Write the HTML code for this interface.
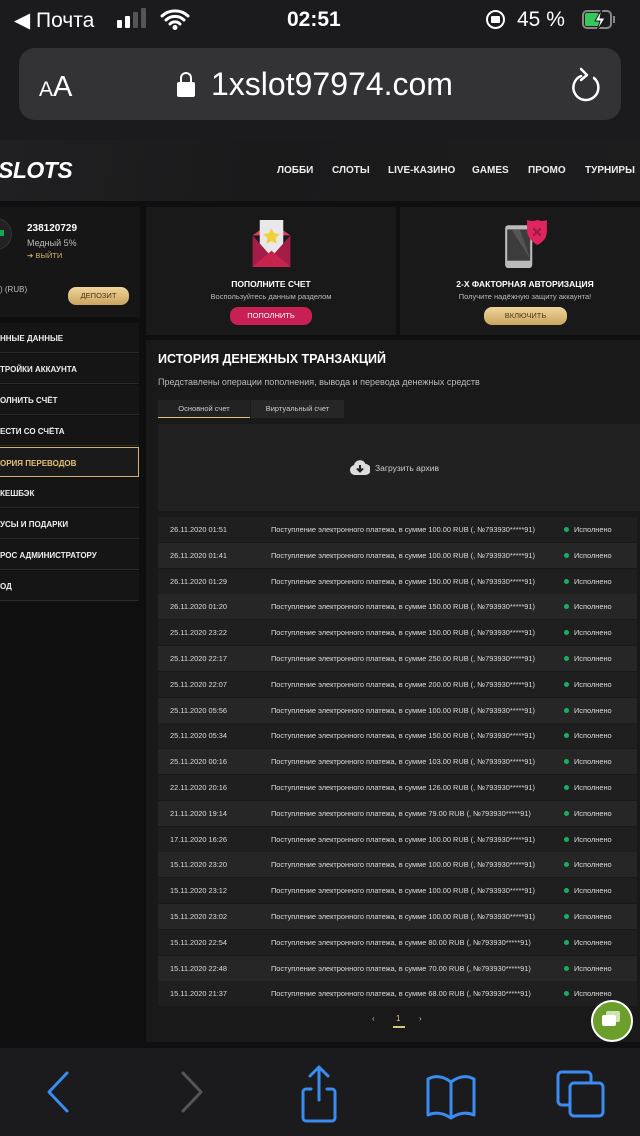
<!DOCTYPE html>
<html><head><meta charset="utf-8">
<style>
*{margin:0;padding:0;box-sizing:border-box}
body{width:640px;height:1136px;overflow:hidden;background:#1b1b1d;font-family:"Liberation Sans",sans-serif;position:relative;color:#fff}
.abs{position:absolute}
.page{position:absolute;left:0;top:140px;width:640px;height:908px;background:#0f0f10;overflow:hidden}
.hdr{position:absolute;left:0;top:0;width:640px;height:61px;background:linear-gradient(100deg,#202022,#1a1a1b 40%,#1d1d1e);}
.nav{position:absolute;top:25px;font-size:10px;font-weight:bold;color:#eee;letter-spacing:0}
.card{position:absolute;background:#19191a}
.menu{position:absolute;left:0;width:139px;height:30px;background:#151516;border-bottom:1px solid #2a2a2a;font-size:8px;font-weight:bold;color:#eee;padding-top:11px;text-transform:uppercase}
.btn{position:absolute;border-radius:8px;font-size:7.5px;text-align:center;line-height:17px}
.gold{background:linear-gradient(#f0d59a,#c9a460);color:#4a3a1a}
.row{position:absolute;left:158px;width:479px;height:25px;font-size:7.4px;color:#ddd;line-height:25px}
.row span{position:absolute}
.dot{width:5px;height:5px;border-radius:50%;background:#19b05c;top:10px}
</style></head><body>
<div class="abs" style="left:14px;top:8px;font-size:21px;color:#fff">◀ Почта</div>
<div class="abs" style="left:117px;top:20px;width:5px;height:8px;background:#fff;border-radius:1px"></div>
<div class="abs" style="left:125px;top:16px;width:5px;height:12px;background:#fff;border-radius:1px"></div>
<div class="abs" style="left:133px;top:12px;width:5px;height:16px;background:#555;border-radius:1px"></div>
<div class="abs" style="left:141px;top:8px;width:5px;height:20px;background:#555;border-radius:1px"></div>
<svg class="abs" style="left:160px;top:8px" width="30" height="22" viewBox="0 0 30 22"><path d="M2 8a19 19 0 0 1 26 0M6 12a13 13 0 0 1 18 0M10 16a7 7 0 0 1 10 0" stroke="#fff" stroke-width="3" fill="none" stroke-linecap="round"/><circle cx="15" cy="19.5" r="2.5" fill="#fff"/></svg>
<div class="abs" style="left:287px;top:8px;font-size:21px;font-weight:bold">02:51</div>
<div class="abs" style="left:486px;top:10px;width:19px;height:19px;border:2px solid #fff;border-radius:50%"></div>
<div class="abs" style="left:491px;top:16px;width:9px;height:7px;background:#fff;border-radius:1px"></div>
<div class="abs" style="left:517px;top:8px;font-size:21px">45 %</div>
<div class="abs" style="left:582px;top:10px;width:30px;height:19px;border:2px solid #888;border-radius:5px"></div>
<div class="abs" style="left:585px;top:13px;width:14px;height:13px;background:#34c759;border-radius:2px"></div>
<div class="abs" style="left:613px;top:16px;width:2px;height:7px;background:#888"></div>
<svg class="abs" style="left:592px;top:8px" width="16" height="24"><path d="M10 1L3 13h5l-3 10 8-13H8z" fill="#fff" stroke="#1b1b1d" stroke-width="1"/></svg>
<div class="abs" style="left:19px;top:48px;width:602px;height:72px;background:#333336;border-radius:16px"></div>
<div class="abs" style="left:39px;top:71px;font-size:29px;color:#fff"><span style="font-size:21px">A</span>A</div>
<div class="abs" style="left:177px;top:82px;width:18px;height:15px;background:#fff;border-radius:2px"></div>
<div class="abs" style="left:180px;top:72px;width:12px;height:14px;border:2.5px solid #fff;border-radius:6px 6px 0 0;border-bottom:none"></div>
<div class="abs" style="left:211px;top:66px;font-size:32px;color:#fff">1xslot97974.com</div>
<svg class="abs" style="left:568px;top:66px" width="36" height="38" viewBox="0 0 36 38"><path d="M13 10A12.5 12.5 0 1 0 26 12" stroke="#fff" stroke-width="2.5" fill="none" stroke-linecap="round"/><path d="M13 3l6 6-6 5" stroke="#fff" stroke-width="2.5" fill="none" stroke-linecap="round" stroke-linejoin="round"/></svg>

<div class="page">
 <div class="hdr"></div>
 <div class="abs" style="left:-2px;top:17px;font-size:23px;font-weight:900;font-style:italic;color:#fff;letter-spacing:-0.5px">SLOTS</div>
 <div class="nav" style="left:277px">ЛОББИ</div>
 <div class="nav" style="left:332px">СЛОТЫ</div>
 <div class="nav" style="left:388px">LIVE-КАЗИНО</div>
 <div class="nav" style="left:472px">GAMES</div>
 <div class="nav" style="left:528px">ПРОМО</div>
 <div class="nav" style="left:585px">ТУРНИРЫ</div>

 <div class="card" style="left:0;top:67px;width:140px;height:110px;background:#161617"></div>
 <div class="abs" style="left:-20px;top:78px;width:32px;height:32px;border-radius:50%;background:#222;border:1px solid #333"></div>
 <div class="abs" style="left:0;top:90px;width:4px;height:6px;background:#1aa552"></div>
 <div class="abs" style="left:27px;top:83px;font-size:10px;font-weight:bold">238120729</div>
 <div class="abs" style="left:27px;top:98px;font-size:9px;color:#bbb">Медный 5%</div>
 <div class="abs" style="left:27px;top:111px;font-size:7.5px;color:#d4b26a">➔ ВЫЙТИ</div>
 <div class="abs" style="left:0;top:145px;font-size:8px;color:#bbb">) (RUB)</div>
 <div class="btn gold" style="left:68px;top:147px;width:61px;height:18px">ДЕПОЗИТ</div>

 <div class="card" style="left:146px;top:67px;width:250px;height:128px"></div>
 <svg class="abs" style="left:248px;top:80px" width="47" height="47" viewBox="0 0 37 46"><path d="M0 15L18 2 37 15z" fill="#d8425a"/><rect x="7" y="0" width="23" height="36" fill="#e8e8ea"/><path d="M18.5 8l2.5 5 5.5.8-4 3.8 1 5.5-5-2.6-5 2.6 1-5.5-4-3.8 5.5-.8z" fill="#f2cf34"/><path d="M0 15L18.5 36 37 15v31H0z" fill="#a31d47"/><path d="M0 46L18.5 30 37 46z" fill="#c8234f"/></svg>
 <div class="abs" style="left:146px;top:139px;width:250px;text-align:center;font-size:8.5px;font-weight:bold">ПОПОЛНИТЕ СЧЕТ</div>
 <div class="abs" style="left:146px;top:152px;width:250px;text-align:center;font-size:7.5px;color:#bbb">Воспользуйтесь данным разделом</div>
 <div class="btn" style="left:230px;top:167px;width:82px;height:18px;background:#c81f55;color:#fff">ПОПОЛНИТЬ</div>

 <div class="card" style="left:400px;top:67px;width:240px;height:128px"></div>
 <svg class="abs" style="left:505px;top:80px" width="42" height="48" viewBox="0 0 40 46"><rect x="0" y="5" width="26" height="41" rx="3" fill="#bbb"/><rect x="2" y="9" width="22" height="30" fill="#3c3c3c"/><path d="M6 9h8l10 28z" fill="#555"/><path d="M21 0q5 2 10 0 5 2 9 0v11q0 8-9 13-9-5-10-13z" fill="#e0245e"/><path d="M27 8l7 7M34 8l-7 7" stroke="#9a1a45" stroke-width="2"/></svg>
 <div class="abs" style="left:400px;top:139px;width:250px;text-align:center;font-size:8.5px;font-weight:bold">2-Х ФАКТОРНАЯ АВТОРИЗАЦИЯ</div>
 <div class="abs" style="left:400px;top:152px;width:250px;text-align:center;font-size:7.5px;color:#bbb">Получите надёжную защиту аккаунта!</div>
 <div class="btn gold" style="left:484px;top:167px;width:83px;height:18px">ВКЛЮЧИТЬ</div>

 <div class="menu" style="top:183px">ННЫЕ ДАННЫЕ</div>
 <div class="menu" style="top:214px">ТРОЙКИ АККАУНТА</div>
 <div class="menu" style="top:245px">ОЛНИТЬ СЧЁТ</div>
 <div class="menu" style="top:276px">ЕСТИ СО СЧЁТА</div>
 <div class="menu" style="top:307px;border:1px solid #d4b26a;border-left:none;color:#e2c27a;background:#1a1a1a">ОРИЯ ПЕРЕВОДОВ</div>
 <div class="menu" style="top:338px">КЕШБЭК</div>
 <div class="menu" style="top:369px">УСЫ И ПОДАРКИ</div>
 <div class="menu" style="top:400px">РОС АДМИНИСТРАТОРУ</div>
 <div class="menu" style="top:431px">ОД</div>

 <div class="card" style="left:146px;top:200px;width:494px;height:702px;background:#19191a"></div>
 <div class="abs" style="left:158px;top:212px;font-size:12.5px;font-weight:bold">ИСТОРИЯ ДЕНЕЖНЫХ ТРАНЗАКЦИЙ</div>
 <div class="abs" style="left:158px;top:237px;font-size:9px;color:#bbb">Представлены операции пополнения, вывода и перевода денежных средств</div>
 <div class="abs" style="left:158px;top:260px;width:92px;height:18px;background:#222;border-bottom:1.5px solid #e2c27a;font-size:7.5px;color:#ccc;text-align:center;line-height:17px">Основной счет</div>
 <div class="abs" style="left:251px;top:260px;width:93px;height:18px;background:#262627;font-size:7.5px;color:#ccc;text-align:center;line-height:18px">Виртуальный счет</div>
 <div class="abs" style="left:158px;top:284px;width:482px;height:87px;background:#212122"></div>
 <svg class="abs" style="left:350px;top:320px" width="20" height="15" viewBox="0 0 20 15"><path d="M5 15a5 5 0 0 1-1-9.9A6 6 0 0 1 15.5 4 5.5 5.5 0 0 1 15 15z" fill="#ddd"/><path d="M10 5v6M7 8.5l3 3 3-3" stroke="#222" stroke-width="2" fill="none"/></svg>
 <div class="abs" style="left:375px;top:323px;font-size:8.5px;color:#ccc">Загрузить архив</div>

 <div id="rows"></div>

 <div class="abs" style="left:372px;top:874px;font-size:8px;color:#bbb">‹</div>
 <div class="abs" style="left:396px;top:874px;font-size:8px;color:#e2c27a">1</div>
 <div class="abs" style="left:393px;top:886px;width:12px;height:1.5px;background:#e2c27a"></div>
 <div class="abs" style="left:419px;top:874px;font-size:8px;color:#bbb">›</div>

 <div class="abs" style="left:591px;top:860px;width:42px;height:42px;border-radius:50%;background:#6b9e2a;border:2px solid #fff"></div>
 <div class="abs" style="left:606px;top:871px;width:14px;height:11px;background:#cfe3b0;border-radius:2px"></div>
 <div class="abs" style="left:602px;top:875px;width:14px;height:11px;background:#fff;border-radius:2px"></div>
</div>

<div class="abs" style="left:0;top:1048px;width:640px;height:88px;background:#1b1b1d"></div>
<svg class="abs" style="left:0;top:1048px" width="640" height="88"><g fill="none" stroke-width="3" stroke-linecap="round" stroke-linejoin="round">
<path d="M67 25L49 44 67 63" stroke="#3b8cf0"/>
<path d="M183 25L201 44 183 63" stroke="#555"/>
<path d="M311 41h-5a3 3 0 0 0-3 3v26a3 3 0 0 0 3 3h26a3 3 0 0 0 3-3V44a3 3 0 0 0-3-3h-5M319 52V20M310 28l9-9 9 9" stroke="#3b8cf0"/>
<path d="M428 67V31q11-6 23 3 12-9 23-3v36q-11-5-23 3-12-8-23-3zM451 34v34" stroke="#3b8cf0"/>
<rect x="558" y="24" width="33" height="33" rx="4" stroke="#3b8cf0"/><rect x="570" y="35" width="33" height="33" rx="4" stroke="#3b8cf0" fill="#1b1b1d"/>
</g></svg>

<script>
var d=[["26.11.2020 01:51","100.00"],["26.11.2020 01:41","100.00"],["26.11.2020 01:29","150.00"],["26.11.2020 01:20","150.00"],["25.11.2020 23:22","150.00"],["25.11.2020 22:17","250.00"],["25.11.2020 22:07","200.00"],["25.11.2020 05:56","100.00"],["25.11.2020 05:34","150.00"],["25.11.2020 00:16","103.00"],["22.11.2020 20:16","126.00"],["21.11.2020 19:14","79.00"],["17.11.2020 16:26","100.00"],["15.11.2020 23:20","100.00"],["15.11.2020 23:12","100.00"],["15.11.2020 23:02","100.00"],["15.11.2020 22:54","80.00"],["15.11.2020 22:48","70.00"],["15.11.2020 21:37","68.00"]];
var h="";for(var i=0;i<d.length;i++){var t=377+i*25.8;h+='<div class="row" style="top:'+t+'px;background:'+(i%2?'#262627':'#1f1f20')+'"><span style="left:12px">'+d[i][0]+'</span><span style="left:113px">Поступление электронного платежа, в сумме '+d[i][1]+' RUB (, №793930*****91)</span><span class="dot" style="left:406px"></span><span style="left:416px">Исполнено</span></div>';}
document.getElementById("rows").outerHTML=h;
</script>
</body></html>
